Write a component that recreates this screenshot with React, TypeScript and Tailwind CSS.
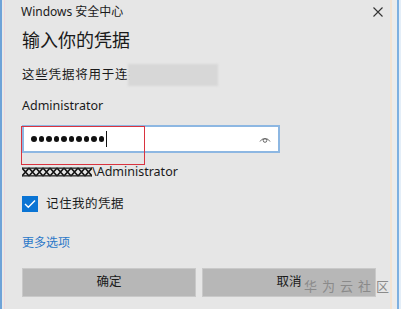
import React from "react";

const FONT = { fontFamily: '"Segoe UI", "Noto Sans", "Noto Sans CJK SC", sans-serif' };

function Mosaic() {
  const cells = [];
  for (let i = 0; i < 10; i++) {
    const x = i * 7;
    cells.push(
      <path key={"a" + i} d={`M${x} 1 L${x + 3.5} 5 L${x} 9 M${x + 7} 1 L${x + 3.5} 5 L${x + 7} 9`} fill="none" stroke="#111" strokeWidth="1.6" />
    );
  }
  return (
    <svg width="70" height="10" viewBox="0 0 70 10" className="shrink-0">
      {cells}
      <rect x="0" y="0.5" width="70" height="1.3" fill="#222" />
      <rect x="0" y="8.2" width="70" height="1.3" fill="#222" />
    </svg>
  );
}

export default function App() {
  return (
    <div className="w-[401px] h-[309px] flex bg-[#e6e6e6] overflow-hidden relative" style={FONT}>
      <div className="w-[2px] bg-[#6fa3d8]" />
      <div className="w-[2px] bg-[#e9e9e9]" />
      <div className="w-[1px] bg-[#f0d8dc]" />
      <div className="flex-1 flex flex-col pl-[17px] pr-[14px] text-[#1a1a1a]">
        <div className="h-[24px] flex items-center justify-between -mr-[7px] -ml-[1px]">
          <span className="text-[12px] leading-[16px]">Windows 安全中心</span>
          <svg width="10" height="10" viewBox="0 0 10 10">
            <path d="M0.5 0.5 L9.5 9.5 M9.5 0.5 L0.5 9.5" stroke="#333" strokeWidth="1.1" />
          </svg>
        </div>
        <div className="mt-[4px] text-[18px] leading-[24px]">输入你的凭据</div>
        <div className="mt-[12px] flex items-center h-[22px]">
          <span className="text-[12.5px] leading-[22px] tracking-[0.8px]">这些凭据将用于连接</span>
        </div>
        <div className="mt-[11px] text-[12.5px] leading-[18px]">Administrator</div>
        <div className="mt-[10px] relative w-[258px] h-[28px] bg-white border-2 border-[#8db7e2] flex items-center pl-[7px] pr-[7px]">
          <div className="flex items-center gap-[2px]">
            {Array.from({ length: 10 }).map((_, i) => (
              <span key={i} className="w-[5.5px] h-[5.5px] rounded-full bg-[#111]" />
            ))}
          </div>
          <span className="ml-[2px] w-[1px] h-[16px] bg-[#111]" />
          <svg className="ml-auto" width="12" height="8" viewBox="0 0 12 8">
            <path d="M1 6.5 A5.5 5 0 0 1 11 6.5" fill="none" stroke="#666" strokeWidth="1" />
            <circle cx="6" cy="5.5" r="1.8" fill="none" stroke="#666" strokeWidth="1" />
          </svg>
          <div className="absolute left-[-3px] top-[-1px] w-[124px] h-[39px] border border-[#d9333f]" />
        </div>
        <div className="mt-[10px] flex items-center h-[18px]">
          <Mosaic />
          <span className="text-[12.5px] leading-[18px]">\Administrator</span>
        </div>
        <div className="mt-[15px] flex items-center h-[16px]">
          <div className="w-[16px] h-[16px] bg-[#0a74d4] flex items-center justify-center">
            <svg width="12" height="10" viewBox="0 0 12 10">
              <path d="M1 5 L4.3 8.3 L11 1.5" fill="none" stroke="white" strokeWidth="1.4" />
            </svg>
          </div>
          <span className="ml-[8px] text-[12.5px] leading-[16px] tracking-[0.5px]">记住我的凭据</span>
        </div>
        <div className="mt-[22px] text-[12px] leading-[18px] text-[#2b78c8]">更多选项</div>
        <div className="mt-[16px] flex gap-[6px]">
          <div className="flex-1 h-[29px] bg-[#b7b7b7] border border-[#c9c9c9] flex items-center justify-center text-[12.5px]">确定</div>
          <div className="flex-1 h-[29px] bg-[#b7b7b7] border border-[#c9c9c9] flex items-center justify-center text-[12.5px]">取消</div>
        </div>
      </div>
      <div className="w-[2px] bg-[#f3e3d3]" />
      <div className="w-[5px] bg-[#ececec]" />
      <div className="w-[2px] bg-[#7fb0e0]" />
      <div className="w-[2px] bg-[#e4eef8]" />
      <div className="absolute left-[128px] top-[64px] w-[90px] h-[22px] bg-[#d7d7d7] blur-[1px]" />
      <div className="absolute left-[304px] top-[278px] text-[13px] leading-[16px] tracking-[5px] text-[#8a8a8a]" style={{ fontFamily: '"Noto Sans CJK SC", sans-serif' }}>华为云社区</div>
    </div>
  );
}
